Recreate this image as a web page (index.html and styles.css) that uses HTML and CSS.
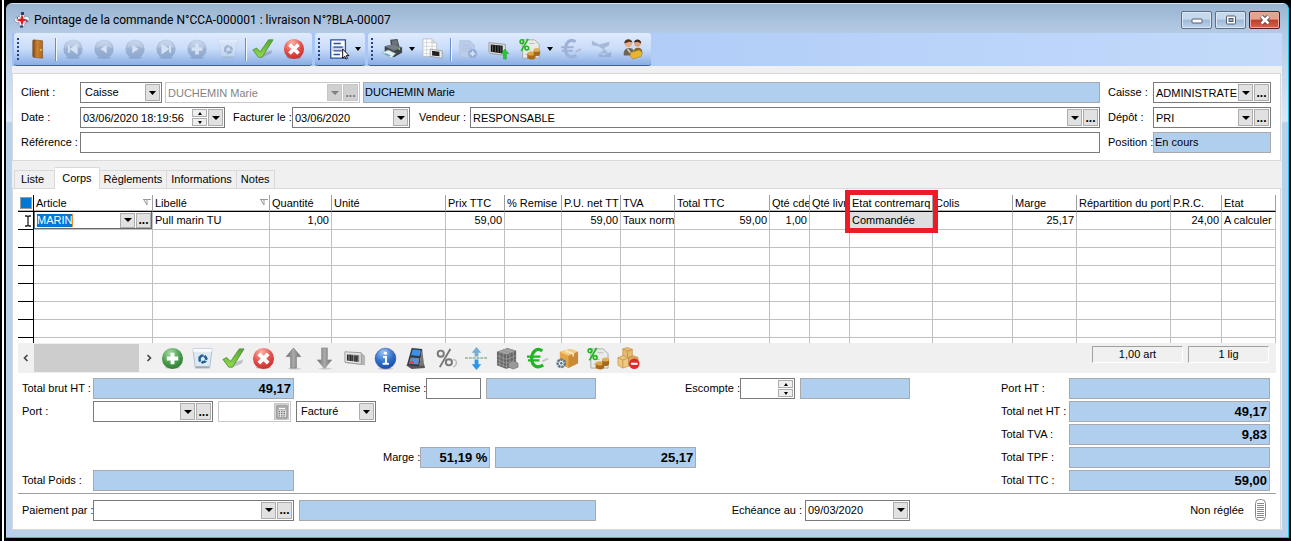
FILE: index.html
```html
<!DOCTYPE html>
<html lang="fr">
<head>
<meta charset="utf-8">
<title>Pointage de la commande</title>
<link rel="stylesheet" href="styles.css">
</head>
<body>
<svg class="defs" aria-hidden="true">
  <defs>
    <radialGradient id="g-green" cx=".4" cy=".25" r=".8"><stop offset="0" stop-color="#a9dba6"/><stop offset=".6" stop-color="#479a4a"/><stop offset="1" stop-color="#2c7a35"/></radialGradient>
    <radialGradient id="g-red" cx=".4" cy=".2" r=".8"><stop offset="0" stop-color="#ffb3aa"/><stop offset=".6" stop-color="#e2504a"/><stop offset="1" stop-color="#c83030"/></radialGradient>
    <radialGradient id="g-blue" cx=".4" cy=".2" r=".8"><stop offset="0" stop-color="#9cc4f5"/><stop offset=".6" stop-color="#2f6fcd"/><stop offset="1" stop-color="#1b4fa6"/></radialGradient>
    <linearGradient id="g-ball" x1="0" y1="0" x2="0" y2="1"><stop offset="0" stop-color="#c2d2ea"/><stop offset=".5" stop-color="#9db3d3"/><stop offset="1" stop-color="#8ba6cf"/></linearGradient>
    <linearGradient id="g-check" x1="0" y1="0" x2="0" y2="1"><stop offset="0" stop-color="#5aa636"/><stop offset="1" stop-color="#8fdc4c"/></linearGradient>
    <linearGradient id="g-gray" x1="0" y1="0" x2="1" y2="0"><stop offset="0" stop-color="#6e6e6e"/><stop offset=".5" stop-color="#aaa"/><stop offset="1" stop-color="#6e6e6e"/></linearGradient>
    <linearGradient id="g-door" x1="0" y1="0" x2="1" y2="0"><stop offset="0" stop-color="#8a4b12"/><stop offset=".4" stop-color="#cf8a35"/><stop offset="1" stop-color="#a9651f"/></linearGradient>
  </defs>
  <symbol id="door" viewBox="0 0 24 24"><path d="M7 2l10 1v19l-10-1z" fill="url(#g-door)" stroke="#7a4312" stroke-width=".6"/><path d="M9 5l2 .4v6L9 11zm3.500.700l2 .4v6l-2-.5zM9 13l2 .4v6L9 19zm3.500.700l2 .4v6l-2-.5z" fill="#b97428"/><path d="M7 2l-1 1v17l1 1z" fill="#6b3a0d"/><circle cx="15.300" cy="13" r=".9" fill="#ffe28a"/></symbol>
  <symbol id="ball" viewBox="0 0 24 24"><ellipse cx="12" cy="21.500" rx="8" ry="1.500" fill="#7c98c6" opacity=".5"/><circle cx="12" cy="12" r="10.500" fill="url(#g-ball)"/><path d="M3 11a9 8 0 0118 0c-5-2-13-2-18 0z" fill="#fff" opacity=".2"/></symbol>
  <symbol id="first" viewBox="0 0 24 24"><use href="#ball"/><path d="M7.500 8v8M16 8l-6 4 6 4z" fill="#d5e2f6" stroke="#d5e2f6" stroke-width="2"/></symbol>
  <symbol id="prev" viewBox="0 0 24 24"><use href="#ball"/><path d="M15 7.500L8 12l7 4.500z" fill="#d5e2f6"/></symbol>
  <symbol id="next" viewBox="0 0 24 24"><use href="#ball"/><path d="M9 7.500l7 4.500-7 4.500z" fill="#d5e2f6"/></symbol>
  <symbol id="last" viewBox="0 0 24 24"><use href="#ball"/><path d="M16.500 8v8M8 8l6 4-6 4z" fill="#d5e2f6" stroke="#d5e2f6" stroke-width="2"/></symbol>
  <symbol id="plus-off" viewBox="0 0 24 24"><use href="#ball"/><path d="M12 6v12M6 12h12" stroke="#d5e2f6" stroke-width="4"/></symbol>
  <symbol id="plus" viewBox="0 0 24 24"><ellipse cx="12" cy="21.500" rx="8" ry="1.500" fill="#aaa" opacity=".5"/><circle cx="12" cy="12" r="11" fill="url(#g-green)"/><path d="M12 6v12M6 12h12" stroke="#fff" stroke-width="4"/></symbol>
  <symbol id="bin" viewBox="0 0 24 24"><path d="M2 2h20l-2.500 20h-15z" fill="#dfe9f2" stroke="#9fb2c4" stroke-width=".8"/><path d="M2 2h20l-.4 3H2.400z" fill="#f7fbff"/><path d="M5 20h14l-.3 2H5.200z" fill="#9aa9b8"/><path d="M9 11l2-2h3l2 3-1 3-3 1-3-2z" fill="none" stroke="#1f5f98" stroke-width="2.600" stroke-dasharray="5 1"/></symbol>
  <symbol id="check" viewBox="0 0 24 24"><path d="M9 22l12-5 1-4-8 3z" fill="#667" opacity=".35"/><path d="M1 13l4-2 4 4 9-13 5 0L11 21H7z" fill="url(#g-check)" stroke="#4b8f2c" stroke-width=".9"/></symbol>
  <symbol id="cross" viewBox="0 0 24 24"><ellipse cx="12" cy="21.500" rx="8" ry="1.500" fill="#855" opacity=".4"/><circle cx="12" cy="12" r="11" fill="url(#g-red)"/><path d="M8.500 8.500l7 7m0-7l-7 7" stroke="#fff" stroke-width="4" stroke-linecap="square"/></symbol>
  <symbol id="list" viewBox="0 0 24 24"><path d="M3 2h16v20H3z" fill="#fff" stroke="#2450a0" stroke-width="1.400"/><path d="M3.600 9h15v5h-15z" fill="#cdd5e4"/><path d="M6 6h8M6 10h10M6 14h9M6 18h7" stroke="#2450a0" stroke-width="1.500"/><path d="M16 12v10l2.300-2 1.400 3 1.600-.8-1.400-3h3z" fill="#fff" stroke="#000" stroke-width="1"/></symbol>
  <symbol id="printer" viewBox="0 0 24 24"><path d="M10 2l8-1 2 8-9 1z" fill="#44494f"/><path d="M11.500 3l6-.7 1 6-6 .7z" fill="#6d747b"/><path d="M4 9l9-2 10 3v6l-9 5-10-4z" fill="#3f444a"/><path d="M4 9l9-2 10 3-9 4z" fill="#767d84"/><path d="M1 16l7-3 8 4-5 5z" fill="#e2eef5" stroke="#8aa" stroke-width=".7"/><path d="M4 17l6 2.500" stroke="#55a5c0" stroke-width="1.500"/><circle cx="20" cy="12" r="1" fill="#7fd46f"/></symbol>
  <symbol id="doc-code" viewBox="0 0 24 24"><path d="M1 1h9l6 5v14H1z" fill="#fdfdfd" stroke="#b4b4b4" stroke-width=".8"/><path d="M1 5h10M1 9h15M1 13h15M1 17h15M5 1v19M11 5v15" stroke="#cfd3d8" stroke-width=".9"/><path d="M10 1v5h6z" fill="#d2d2d2"/><path d="M9 12l13 2v8l-13-2z" fill="#eee" stroke="#888" stroke-width=".7"/><path d="M11 14l8 1v5l-8-1z" fill="#222"/></symbol>
  <symbol id="doc-plus" viewBox="0 0 24 24"><path d="M3 3h11l5 5v13H3z" fill="#bccdea" stroke="#aabddd" stroke-width=".8"/><path d="M6 8h8M6 11h10M6 14h6" stroke="#abbfdf"/><circle cx="17" cy="17" r="5" fill="#94acd3"/><path d="M17 14v6m-3-3h6" stroke="#d7e3f6" stroke-width="1.800"/></symbol>
  <symbol id="barcode" viewBox="0 0 24 24"><path d="M2 5l17 1 4 3v10l-19-2-2-2z" fill="#b5b5b5"/><path d="M2 5l17 1v12L2 16z" fill="#e6e6e6" stroke="#8c8c8c" stroke-width=".8"/><path d="M4 7.500l13 .8v7.500L4 14.200z" fill="#888"/><path d="M5 8v6m2.500-6v6.500M9.500 8.500v6m3-5.500v6m2-6v6" stroke="#111" stroke-width="1.200"/></symbol>
  <symbol id="barcode-up" viewBox="0 0 24 24"><path d="M1 5l18 2v12L3 17l-2-2z" fill="#ddd" stroke="#888" stroke-width=".8"/><path d="M3 7l13 1.500V17L3 15z" fill="#111"/><path d="M5 7.500v7.500m3-7v7.500m3-7v7.500m3-7v7.500" stroke="#999" stroke-width=".6"/><path d="M18.500 12l4 5h-2.500v6h-3v-6h-2.500z" fill="#27c931" stroke="#0d9418" stroke-width=".5"/></symbol>
  <symbol id="doc-pct" viewBox="0 0 24 24"><path d="M4 2h13l5 5v15H4z" fill="#e9ebe9" stroke="#969a96" stroke-width=".8"/><path d="M11 6h6M8 13h5M7 18h3" stroke="#b5bbb5"/><circle cx="3.200" cy="4" r="2" fill="none" stroke="#1eb81e" stroke-width="1.700"/><circle cx="8.500" cy="11" r="2" fill="none" stroke="#1eb81e" stroke-width="1.700"/><path d="M10 1L2.500 14" stroke="#1eb81e" stroke-width="1.800"/><path d="M9 17v5c3 2 8 2 9-.5v-5z" fill="#a96a18"/><ellipse cx="13.500" cy="17" rx="4.500" ry="2.200" fill="#dba84c"/><path d="M16 13v6c3 1.500 6 1 7-1v-5z" fill="#a56a1e"/><ellipse cx="19.500" cy="13" rx="3.700" ry="2" fill="#deb05d"/></symbol>
  <symbol id="euro" viewBox="0 0 24 24"><path d="M17 15l6-3" stroke="#999" opacity=".5" stroke-width="2"/><path d="M17 4c-6-4-11 1-11 8s5 11 12 7" fill="none" stroke="currentColor" stroke-width="3.400"/><path d="M1 10h14M2 14h12" stroke="currentColor" stroke-width="2.200"/></symbol>
  <symbol id="handshake" viewBox="0 0 24 24"><path d="M1 3l8 4 11-3v4l-6 3 5 6H9l5-4-6-4-7-1z" fill="#a6b9d9"/><path d="M8 17l6 2 8-4v6H9z" fill="#9ab0d4"/></symbol>
  <symbol id="people" viewBox="0 0 24 24"><path d="M2 19c-1-5 2-8 6-8s6 3 5 8z" fill="#6d6550"/><path d="M13 14c0-4 8-5 9 0v3h-9z" fill="#7c6434"/><circle cx="7" cy="6" r="4" fill="#e7ad87"/><path d="M2.500 6c0-6 8-6 9-1L8 4z" fill="#57321c"/><circle cx="17" cy="6" r="3.500" fill="#dfa079"/><path d="M13 5c1-5 8-4 8 1l-4-2z" fill="#3c2416"/><path d="M9 16l10-3 3 3-1 4-9 3-3-3z" fill="#e8b52f" stroke="#b5821a" stroke-width=".7"/><path d="M6 12l3 4" stroke="#ddd" stroke-width="1.500"/></symbol>
  <symbol id="up" viewBox="0 0 24 24"><ellipse cx="13" cy="22.500" rx="7" ry="1" fill="#999" opacity=".4"/><path d="M12 1l7.500 9H15v12H9V10H4.500z" fill="url(#g-gray)" stroke="#777" stroke-width=".7"/></symbol>
  <symbol id="down" viewBox="0 0 24 24"><ellipse cx="13" cy="22.500" rx="7" ry="1" fill="#999" opacity=".4"/><path d="M12 22.500l7.500-9H15V1H9v12.500H4.500z" fill="url(#g-gray)" stroke="#888" stroke-width=".7"/></symbol>
  <symbol id="info" viewBox="0 0 24 24"><ellipse cx="12" cy="22.500" rx="8" ry="1.200" fill="#999" opacity=".4"/><circle cx="12" cy="12" r="10.800" fill="url(#g-blue)" stroke="#1a4a9c" stroke-width=".6"/><circle cx="12" cy="6.500" r="1.700" fill="#fff"/><path d="M9.500 10.500h3v6.500M9 17.500h6.500" fill="none" stroke="#fff" stroke-width="2"/></symbol>
  <symbol id="terminal" viewBox="0 0 24 24"><path d="M2 19l6 4 14-1-1-4z" fill="#555"/><path d="M8 1l11 1-3 18-13-1z" fill="#333a44"/><path d="M9 2.500l8.500.800-1 6-9-.8z" fill="#3c92e8"/><path d="M7 11l9 .8-1 6.500-10-.8z" fill="#7b8fa8"/><path d="M8.500 12l-1 5m4-5l-1 5m4-4.500l-1 5" stroke="#3f93f5" stroke-width="1.500"/><path d="M6 16h4" stroke="#e33" stroke-width="2"/><path d="M19 2l2 17-5 1z" fill="#777"/></symbol>
  <symbol id="percent" viewBox="0 0 24 24"><path d="M19 13c5 1 4 6 0 8" fill="none" stroke="#bbb" stroke-width="1.400"/><circle cx="6" cy="7" r="3.200" fill="none" stroke="#777" stroke-width="2"/><circle cx="14.500" cy="16" r="3.200" fill="none" stroke="#777" stroke-width="2"/><path d="M16 2L5 21" stroke="#777" stroke-width="2"/></symbol>
  <symbol id="split" viewBox="0 0 24 24"><path d="M12 0l5 6h-3v4h-4V6H7z" fill="#75aed4"/><path d="M12 24l5-6h-3v-5h-4v5H7z" fill="#2d97ea"/><path d="M0 11.500h24" stroke="#58966c" stroke-width="1.200" stroke-dasharray="3 1"/></symbol>
  <symbol id="cube" viewBox="0 0 24 24"><path d="M1 5l11-4 9 3v14l-10 5-10-4z" fill="#666"/><path d="M1 5l11-4 9 3-10 4z" fill="#999"/><path d="M1 9l10 4 10-4M1 13l10 4 10-4M1 16.500l10 4 10-4M4 6v14m3.500-13v14M11 8v15m3.500-16v14M18 5v14M4 4l10 3.500M8 2.500l10 3" fill="none" stroke="#b2b2b2" stroke-width=".6"/><path d="M13 17l5-3 5 3v4l-5 2-5-2z" fill="#999" stroke="#666" stroke-width=".6"/></symbol>
  <symbol id="box-gear" viewBox="0 0 24 24"><path d="M4 5l11-3 8 3v12l-10 5-9-4z" fill="#e4a548"/><path d="M4 5l11-3 8 3-10 4z" fill="#f6cd84"/><path d="M13 9l10-4v12l-10 5z" fill="#c98a35"/><path d="M10 4l8 3v3" stroke="#fff0c8" stroke-width="1.500" fill="none"/><circle cx="5.500" cy="17" r="3.800" fill="#e7edf2" stroke="#5d7488" stroke-width="2.600" stroke-dasharray="2.600 .7"/><circle cx="5.500" cy="17" r="1.300" fill="#5d7488"/></symbol>
  <symbol id="boxes-minus" viewBox="0 0 24 24"><path d="M6 2l5-1.500 5 2v7l-5 2-5-2z" fill="#e6ba72" stroke="#b98537" stroke-width=".6"/><path d="M1 11l6-2 5 2.500V20l-6 2-5-3z" fill="#edc882" stroke="#b98537" stroke-width=".6"/><path d="M12 11l5-2 5 2v8l-5 2-5-2z" fill="#d9a75a" stroke="#b98537" stroke-width=".6"/><path d="M1 11l5 2.500 6-2M6 13.500V22M6 2l5 2.500 5-2M11 4.500v6" fill="none" stroke="#b98537" stroke-width=".7"/><circle cx="18" cy="17.500" r="5.500" fill="#df2a2a"/><path d="M14.500 17.500h7" stroke="#fff" stroke-width="2.200"/></symbol>
  <symbol id="logo" viewBox="0 0 16 16"><path d="M8 0l3 4-1 1 4-1 2 4-4 3-1-1 0 3-3 3-3-3 0-3-2 1-3-3 3-4 3 1-1-1z" fill="#eef3f8" stroke="#7a93b0" stroke-width=".7"/><path d="M8 4l1 3 3 1-3 1-1 3-1-3-3-1 3-1z" fill="#e0191c" stroke="#e0191c" stroke-width="1.200"/><path d="M7 0h3v3H7zM2 6l2-1v2zM12 8l3 1-3 1zM6 13.500h3v2H6z" fill="#24416e"/></symbol>
  <symbol id="calc" viewBox="0 0 12 14"><path d="M1 1h10v12H1z" fill="#e4e4e4" stroke="#777"/><path d="M2.500 2.500h7v2h-7z" fill="#fff" stroke="#888" stroke-width=".6"/><path d="M2.500 6.500h7m-7 2.200h7m-7 2.200h7" stroke="#777" stroke-width="1.300" stroke-dasharray="1.500 1"/></symbol>
</svg>

<div class="window">
  <header class="titlebar">
    <svg class="logo"><use href="#logo"/></svg>
    <h1>Pointage de la commande N°CCA-000001 : livraison N°?BLA-00007</h1>
    <button class="win-btn" aria-label="Réduire"><svg viewBox="0 0 12 10"><rect x="1" y="4" width="10" height="4" rx="1" fill="#fff" stroke="#555b6b"/></svg></button>
    <button class="win-btn" aria-label="Agrandir"><svg viewBox="0 0 12 10"><rect x="1.500" y="1" width="9" height="8" rx="1" fill="#fff" stroke="#555b6b"/><rect x="4" y="3.500" width="4" height="3" fill="#8fb0d0" stroke="#555b6b"/></svg></button>
    <button class="win-btn close" aria-label="Fermer"><svg viewBox="0 0 12 10"><path d="M2.500 1.500l7 7m0-7l-7 7" stroke="#4d4450" stroke-width="4.400"/><path d="M2.500 1.500l7 7m0-7l-7 7" stroke="#fff" stroke-width="2.600"/></svg></button>
  </header>

  <div class="content">
    <nav class="toolbar">
      <div class="group">
        <span class="grip"></span>
        <button class="tool" aria-label="Quitter"><svg><use href="#door"/></svg></button>
        <span class="sep"></span>
        <button class="tool" aria-label="Premier"><svg><use href="#first"/></svg></button>
        <button class="tool" aria-label="Précédent"><svg><use href="#prev"/></svg></button>
        <button class="tool" aria-label="Suivant"><svg><use href="#next"/></svg></button>
        <button class="tool" aria-label="Dernier"><svg><use href="#last"/></svg></button>
        <button class="tool" aria-label="Ajouter"><svg><use href="#plus-off"/></svg></button>
        <button class="tool faded" aria-label="Supprimer"><svg><use href="#bin"/></svg></button>
        <span class="sep"></span>
        <button class="tool" aria-label="Valider"><svg><use href="#check"/></svg></button>
        <button class="tool" aria-label="Annuler"><svg><use href="#cross"/></svg></button>
      </div>
      <div class="group">
        <span class="grip"></span>
        <button class="tool" aria-label="Liste"><svg><use href="#list"/></svg></button>
        <button class="drop" aria-label="Options de liste"></button>
      </div>
      <div class="group">
        <span class="grip"></span>
        <button class="tool" aria-label="Imprimer"><svg><use href="#printer"/></svg></button>
        <button class="drop" aria-label="Options d'impression"></button>
        <button class="tool" aria-label="Étiquettes"><svg><use href="#doc-code"/></svg></button>
        <span class="sep"></span>
        <button class="tool" aria-label="Nouveau document"><svg><use href="#doc-plus"/></svg></button>
        <button class="tool" aria-label="Code barre"><svg><use href="#barcode-up"/></svg></button>
        <button class="tool" aria-label="Tarifs"><svg><use href="#doc-pct"/></svg></button>
        <button class="drop" aria-label="Options de tarifs"></button>
        <button class="tool euro-off" aria-label="Règlement"><svg><use href="#euro"/></svg></button>
        <button class="tool" aria-label="Accord"><svg><use href="#handshake"/></svg></button>
        <button class="tool" aria-label="Clients"><svg><use href="#people"/></svg></button>
      </div>
    </nav>

    <form class="panel head-form">
      <div class="head-left">
        <div class="row">
          <label class="lbl" for="client">Client :</label>
          <div class="pair">
            <select id="client" class="box select w-client"><option>Caisse</option></select>
            <div class="box combo off w-name"><input aria-label="Nom du client" value="DUCHEMIN Marie" disabled><button type="button" class="mini arrow" aria-label="Dérouler" disabled></button><button type="button" class="mini dots" disabled>...</button></div>
            <output class="box ro grow">DUCHEMIN Marie</output>
          </div>
        </div>
        <div class="row">
          <label class="lbl" for="date">Date :</label>
          <div class="box combo w-date"><input id="date" value="03/06/2020 18:19:56"><span class="spin"><button type="button" class="spin-up" aria-label="Plus"></button><button type="button" class="spin-down" aria-label="Moins"></button></span><button type="button" class="mini arrow" aria-label="Calendrier"></button></div>
          <label class="lbl-mid" for="fact">Facturer le :</label>
          <div class="box combo w-fact"><input id="fact" value="03/06/2020"><button type="button" class="mini arrow" aria-label="Calendrier"></button></div>
          <label class="lbl-seller" for="vendeur">Vendeur :</label>
          <div class="box combo grow"><input id="vendeur" value="RESPONSABLE"><button type="button" class="mini arrow" aria-label="Dérouler"></button><button type="button" class="mini dots">...</button></div>
        </div>
        <div class="row">
          <label class="lbl" for="ref">Référence :</label>
          <input id="ref" class="box grow">
        </div>
      </div>
      <div class="head-right">
        <div class="row"><label class="lbl-right" for="caisse">Caisse :</label><div class="box combo grow"><input id="caisse" value="ADMINISTRATE"><button type="button" class="mini arrow" aria-label="Dérouler"></button><button type="button" class="mini dots">...</button></div></div>
        <div class="row"><label class="lbl-right" for="depot">Dépôt :</label><div class="box combo grow"><input id="depot" value="PRI"><button type="button" class="mini arrow" aria-label="Dérouler"></button><button type="button" class="mini dots">...</button></div></div>
        <div class="row"><span class="lbl-right">Position :</span><output class="box ro grow">En cours</output></div>
      </div>
    </form>

    <div class="tabs" role="tablist">
      <button role="tab" class="tab tab-list">Liste</button>
      <button role="tab" class="tab active" aria-selected="true">Corps</button>
      <button role="tab" class="tab">Règlements</button>
      <button role="tab" class="tab">Informations</button>
      <button role="tab" class="tab">Notes</button>
    </div>

    <main class="panel page">
      <table class="grid">
        <colgroup><col class="c16"><col class="c119"><col class="c117"><col class="c62"><col><col class="c59"><col class="c57"><col class="c59"><col class="c54"><col class="c95"><col class="c40"><col class="c40"><col class="c83"><col class="c80"><col class="c64"><col class="c94"><col class="c51"><col class="c54"></colgroup>
        <thead>
          <tr>
            <th class="mark"><span class="square"></span></th>
            <th class="filter">Article<svg viewBox="0 0 8 7"><path d="M0 .5h8M1 1l3 5V1" fill="none" stroke="#999"/></svg></th>
            <th class="filter">Libellé<svg viewBox="0 0 8 7"><path d="M0 .5h8M1 1l3 5V1" fill="none" stroke="#999"/></svg></th>
            <th>Quantité</th><th>Unité</th><th>Prix TTC</th><th>% Remise</th><th>P.U. net TT</th><th>TVA</th><th>Total TTC</th><th>Qté cde</th><th>Qté livr</th>
            <th class="marked">Etat contremarq<span class="highlight"></span></th>
            <th>Colis</th><th>Marge</th><th>Répartition du port</th><th>P.R.C.</th><th>Etat</th>
          </tr>
        </thead>
        <tbody>
          <tr>
            <td><svg class="caret" viewBox="0 0 8 12"><path d="M1 1h2l1 1 1-1h2M4 2v8M1 11h2l1-1 1 1h2" fill="none" stroke="#222" stroke-width="1.300"/></svg></td>
            <td class="edit"><div class="cell-combo"><span class="sel">MARIN</span><button class="mini arrow" aria-label="Dérouler"></button><button class="mini dots">...</button></div></td>
            <td>Pull marin TU</td><td class="num">1,00</td><td></td><td class="num">59,00</td><td></td><td class="num">59,00</td><td>Taux norm</td><td class="num">59,00</td><td class="num">1,00</td><td></td><td class="gray">Commandée</td><td></td><td class="num">25,17</td><td></td><td class="num">24,00</td><td>A calculer</td>
          </tr>
          <tr><td><td><td><td><td><td><td><td><td><td><td><td><td><td><td><td><td><td></tr>
          <tr><td><td><td><td><td><td><td><td><td><td><td><td><td><td><td><td><td><td></tr>
          <tr><td><td><td><td><td><td><td><td><td><td><td><td><td><td><td><td><td><td></tr>
          <tr><td><td><td><td><td><td><td><td><td><td><td><td><td><td><td><td><td><td></tr>
          <tr><td><td><td><td><td><td><td><td><td><td><td><td><td><td><td><td><td><td></tr>
          <tr><td><td><td><td><td><td><td><td><td><td><td><td><td><td><td><td><td><td></tr>
          <tr class="partial"><td><td><td><td><td><td><td><td><td><td><td><td><td><td><td><td><td><td></tr>
        </tbody>
      </table>

      <div class="actions">
        <div class="scroller">
          <button aria-label="Défiler à gauche"><svg viewBox="0 0 6 8"><path d="M4.500 1l-3 3 3 3" fill="none" stroke="#444" stroke-width="1.600"/></svg></button>
          <span class="thumb"></span>
          <button aria-label="Défiler à droite"><svg viewBox="0 0 6 8"><path d="M1.500 1l3 3-3 3" fill="none" stroke="#444" stroke-width="1.600"/></svg></button>
        </div>
        <div class="tools">
          <button aria-label="Ajouter"><svg><use href="#plus"/></svg></button>
          <button aria-label="Supprimer"><svg><use href="#bin"/></svg></button>
          <button aria-label="Valider"><svg><use href="#check"/></svg></button>
          <button aria-label="Annuler"><svg><use href="#cross"/></svg></button>
          <button aria-label="Monter"><svg><use href="#up"/></svg></button>
          <button aria-label="Descendre"><svg><use href="#down"/></svg></button>
          <button aria-label="Code barre"><svg><use href="#barcode"/></svg></button>
          <button aria-label="Informations"><svg><use href="#info"/></svg></button>
          <button aria-label="Terminal"><svg><use href="#terminal"/></svg></button>
          <button aria-label="Remise"><svg><use href="#percent"/></svg></button>
          <button aria-label="Insérer"><svg><use href="#split"/></svg></button>
          <button aria-label="Stock"><svg><use href="#cube"/></svg></button>
          <button class="euro" aria-label="Prix"><svg><use href="#euro"/></svg></button>
          <button aria-label="Colisage"><svg><use href="#box-gear"/></svg></button>
          <button aria-label="Tarifs"><svg><use href="#doc-pct"/></svg></button>
          <button aria-label="Retirer"><svg><use href="#boxes-minus"/></svg></button>
        </div>
        <output class="status w-art">1,00 art</output>
        <output class="status w-lig">1 lig</output>
      </div>

      <form class="totals">
        <div class="sums">
          <span>Total brut HT :</span><output class="box ro bold w-201">49,17</output>
          <div class="pair near"><label for="remise">Remise :</label><input id="remise" class="box w-55"><output class="box ro w-110"></output></div>
          <div class="pair near"><label for="esc">Escompte :</label><div class="box combo w-55"><input id="esc"><span class="spin"><button type="button" class="spin-up" aria-label="Plus"></button><button type="button" class="spin-down" aria-label="Moins"></button></span></div><output class="box ro w-110"></output></div>

          <label for="port">Port :</label>
          <div class="pair port"><div class="box combo w-120"><input id="port"><button type="button" class="mini arrow" aria-label="Dérouler"></button><button type="button" class="mini dots">...</button></div><div class="box combo off w-73"><input aria-label="Montant du port" disabled><button type="button" class="mini calc" aria-label="Calculatrice" disabled><svg><use href="#calc"/></svg></button></div><select class="box select w-80" aria-label="Facturation du port"><option>Facturé</option></select></div>

          <div class="pair near margin"><span>Marge :</span><output class="box ro bold w-70">51,19 %</output><output class="box ro bold w-201">25,17</output></div>

          <span class="last">Total Poids :</span><output class="box ro w-201 last"></output>
        </div>
        <div class="side">
          <span>Port HT :</span><output class="box ro bold"></output>
          <span>Total net HT :</span><output class="box ro bold">49,17</output>
          <span>Total TVA :</span><output class="box ro bold">9,83</output>
          <span>Total TPF :</span><output class="box ro bold"></output>
          <span>Total TTC :</span><output class="box ro bold">59,00</output>
        </div>
      </form>

      <footer class="pay">
        <label class="pay-lbl" for="pay">Paiement par :</label>
        <div class="box combo w-201"><input id="pay"><button type="button" class="mini arrow" aria-label="Dérouler"></button><button type="button" class="mini dots">...</button></div>
        <output class="box ro pay-ro"></output>
        <label class="due" for="ech">Echéance au :</label>
        <div class="box combo w-105"><input id="ech" value="09/03/2020"><button type="button" class="mini arrow" aria-label="Calendrier"></button></div>
        <span class="unpaid">Non réglée</span>
        <svg class="coins" viewBox="0 0 11 22"><rect x=".5" y=".5" width="10" height="21" rx="4" fill="#fff" stroke="#888"/><path d="M2 4.500h7M2 6.500h7M2 8.500h7M2 10.500h7M2 12.500h7M2 14.500h7M2 16.500h7M2 18.500h7" stroke="#888"/></svg>
      </footer>
    </main>
  </div>
</div>
</body>
</html>
```
FILE: styles.css
```css
* { box-sizing: border-box; }
body {
  margin: 0;
  min-height: 100vh;
  padding: 3px 2px 3px 6px;
  display: flex;
  background: linear-gradient(to right, #000 2px, #fff 2px 4px, #000 4px);
  font: 11px/13px "Liberation Sans", Arial, sans-serif;
  color: #000;
}
button, input, select { font: inherit; color: inherit; padding: 0; margin: 0; border: 0; background: none; min-width: 0; border-radius: 0; }
.defs { position: absolute; width: 0; height: 0; }

.window {
  flex: 1;
  min-width: 0;
  display: flex;
  flex-direction: column;
  padding: 0 6px 7px;
  border-right: 1px solid #19c8e8;
  border-bottom: 1px solid #19c8e8;
  border-radius: 6px 6px 0 0;
  background: linear-gradient(#d4e2f0 0 1px, #99b4d1 1px, #b4cbe5 30px, #dbe8f8 118px, #b9d1ea 120px);
}
.titlebar { height: 30px; display: flex; align-items: center; gap: 3px; padding: 4px 2px 0; }
.titlebar h1 { flex: 1; margin: 0 0 0 1px; font: 12px/16px Roboto, sans-serif; }
.logo { width: 16px; height: 16px; }
.win-btn {
  width: 31px; height: 18px;
  display: grid; place-items: center;
  border: 1px solid #5d7186; border-radius: 2px;
  background: linear-gradient(#c5d8ec 45%, #9db9d6 50%, #bdd3ea);
  box-shadow: inset 0 0 0 1px #dbe7f4;
}
.win-btn svg { width: 12px; height: 10px; }
.win-btn.close { border-color: #5a1f1c; background: linear-gradient(#e4a291 45%, #bf3d24 50%, #d0684c); box-shadow: inset 0 0 0 1px #e8ab9d; }

.content { flex: 1; display: flex; flex-direction: column; background: #f0f0f0; }
.toolbar { height: 33px; display: flex; gap: 3px; padding-left: 2px; margin-bottom: 7px; background: linear-gradient(to right, #9fbff5, #c3dafa); }
.group {
  display: flex; align-items: center; padding: 0 3px;
  border-bottom: 1px solid #3b619c; border-radius: 3px;
  background: linear-gradient(#dfebfd, #c9dcf9 50%, #8aade4);
}
.grip { width: 2px; height: 23px; margin-right: 3px; background: repeating-linear-gradient(#27418a 0 2px, transparent 2px 4px); }
.sep { width: 4px; height: 23px; background: linear-gradient(to right, transparent 2px, #6a8ccb 2px 3px, #f4f8ff 3px); }
.tool { width: 31px; height: 28px; display: grid; place-items: center; }
.tool svg { width: 22px; height: 22px; }
.faded { opacity: .3; filter: grayscale(.6); }
.euro-off { color: #9db2d6; }
.drop { width: 10px; height: 28px; display: grid; place-items: center; }
.group:nth-child(2) .drop { width: 8px; }
.drop::before, .arrow::before { content: ""; border: 3px solid transparent; border-top: 4px solid #000; border-bottom: 0; }

.panel { background: #fff; border: 1px solid #d9d9d9; margin-right: 1px; }
.head-form { display: flex; gap: 8px; padding: 8px 9px 7px 8px; }
.head-left { flex: 1; display: grid; gap: 4px; min-width: 0; }
.head-right { width: 163px; display: grid; gap: 4px; }
.row { display: flex; align-items: center; min-width: 0; white-space: nowrap; }
.pair { flex: 1; display: flex; align-items: center; gap: 3px; }
.near { gap: 5px; }
.near > :first-child { margin-right: -5px; }
.lbl { width: 59px; }
.lbl-mid { width: 67px; padding-left: 8px; }
.lbl-seller { width: 60px; padding-left: 9px; }
.lbl-right { width: 45px; }
.grow { flex: 1; }

.box { height: 21px; border: 1px solid #7a7a7a; background: #fff; padding: 0 2px; display: block; min-width: 0; }
.ro { background: #b0ceed; border-color: #a9a9ad; line-height: 19px; padding: 0 1px; }
.bold { font-weight: bold; font-size: 13px; text-align: right; padding-right: 2px; }
.combo { display: flex; align-items: center; gap: 1px; padding: 0 1px 0 2px; }
.combo input { flex: 1; width: 0; height: 17px; }
.off { border-color: #c8c8c8; color: #838383; }
.mini { width: 15px; height: 17px; flex: none; display: grid; place-items: center; border: 1px solid #adadad; background: #e1e1e1; line-height: 10px; font-weight: bold; font-size: 12px; }
.off .mini { background: #d0d0d0; border-color: #c6c6c6; color: #777; }
.off .arrow::before { border-top-color: #808080; }
.off .calc svg { width: 12px; height: 14px; }
.arrow::before { border-width: 4px 4px 0; }
.spin { display: grid; gap: 1px; width: 15px; }
.spin button { height: 8px; display: grid; place-items: center; border: 1px solid #adadad; background: #eee; }
.spin button::before { content: ""; border: 2px solid transparent; }
.spin .spin-up::before { border-top: 0; border-bottom: 3px solid #000; }
.spin .spin-down::before { border-bottom: 0; border-top: 3px solid #000; }
.select {
  appearance: none; padding: 0 18px 0 4px;
  background: #fff url("data:image/svg+xml,%3Csvg xmlns='http://www.w3.org/2000/svg' width='15' height='17'%3E%3Cpath d='M.5.5h14v16H.5z' fill='%23e1e1e1' stroke='%23adadad'/%3E%3Cpath d='M4 7h7l-3.500 4z'/%3E%3C/svg%3E") no-repeat right 1px center;
}
.w-client { width: 82px; }
.w-name { width: 195px; }
.w-date { width: 145px; }
.w-fact { width: 118px; }
.w-201 { width: 201px; }
.w-120 { width: 120px; }
.w-110 { width: 110px; }
.w-105 { width: 105px; }
.w-80 { width: 80px; }
.w-73 { width: 73px; }
.w-70 { width: 70px; }
.w-55 { width: 55px; }

.tabs { display: flex; align-items: flex-end; margin-top: 6px; padding-left: 2px; height: 21px; }
.tab { height: 18px; padding: 0 4px; border: 1px solid #d9d9d9; border-width: 1px 1px 0 0; }
.tab-list { padding: 0 10px 0 6px; border-left-width: 1px; }
.tab.active { height: 22px; margin-bottom: -1px; padding: 0 7px; background: #fff; position: relative; }

.page { flex: 1; display: flex; flex-direction: column; padding: 6px 4px 0 5px; }
.grid { width: 100%; table-layout: fixed; border-spacing: 0; }
.grid th, .grid td { padding: 0 1px 0 2px; overflow: hidden; white-space: nowrap; text-align: left; font-weight: normal; }
.grid th { height: 17px; border-bottom: 1px solid #000; border-right: 1px solid #a0a0a0; box-shadow: inset 0 -1px #b8b8b8; }
.grid td { height: 18px; border: 1px solid #c0c0c0; border-width: 0 1px 1px 0; }
.grid tr > :first-child { border-right-color: #000; border-bottom-color: #000; padding: 0; text-align: center; }
.grid .num { text-align: right; padding-right: 2px; }
.grid .partial td { height: 5px; border-bottom: 0; }
.grid .gray { background: #dedede; }
.grid .filter svg { float: right; width: 8px; height: 7px; margin-top: 2px; }
.grid .edit { padding: 0; }
.square { display: block; width: 10px; height: 10px; margin: 0 auto; background: #0078d7; outline: 1px solid #9a9a9a; }
.caret { display: block; width: 8px; height: 12px; margin-left: 6px; }
.cell-combo { display: flex; height: 17px; align-items: center; gap: 1px; border: 1px solid #696969; border-top: 0; padding-left: 2px; }
.cell-combo .mini { height: 15px; }
.sel { background: #0078d7; color: #fff; margin-right: auto; border-right: 1px solid #f08a24; }
.grid .marked { position: relative; overflow: visible; }
.highlight { position: absolute; z-index: 1; left: -5px; top: -5px; width: 93px; height: 43px; border: 5px solid #ed1c24; pointer-events: none; }
.c16 { width: 16px; } .c119 { width: 119px; } .c117 { width: 117px; } .c62 { width: 62px; }
.c59 { width: 59px; } .c57 { width: 57px; } .c54 { width: 54px; } .c95 { width: 95px; }
.c40 { width: 40px; } .c83 { width: 83px; } .c80 { width: 80px; } .c64 { width: 64px; }
.c94 { width: 94px; } .c51 { width: 51px; }

.actions { display: flex; background: #f0f0f0; height: 30px; padding-right: 7px; }
.scroller { display: flex; width: 139px; }
.scroller button { width: 16px; display: grid; place-items: center; }
.scroller svg { width: 6px; height: 8px; }
.thumb { flex: 1; margin: 1px 2px 1px 0; background: #cdcdcd; }
.tools { display: grid; grid-template-columns: repeat(16, 1fr); width: 487px; margin-right: auto; }
.tools button { display: grid; place-items: center; }
.tools svg { width: 23px; height: 23px; }
.euro { color: #22b422; }
.status { height: 17px; margin: 3px 0 0 5px; border: 1px solid; border-color: #a0a0a0 #fff #fff #a0a0a0; text-align: center; line-height: 15px; }
.w-art { width: 91px; }
.w-lig { width: 81px; }

.totals { display: flex; padding: 5px 6px 2px 4px; border-bottom: 1px solid #a0a0a0; }
.sums { flex: 1; display: grid; grid-template-columns: 71px 290px 302px 1fr; grid-template-rows: repeat(5, 21px); row-gap: 2px; align-items: center; white-space: nowrap; }
.port { grid-column: 2 / 5; gap: 5px; }
.margin { grid-column: 3 / 5; grid-row: 4; }
.last { grid-row: 5; }
.side { width: 269px; display: grid; grid-template-columns: 68px 1fr; grid-template-rows: repeat(5, 21px); row-gap: 2px; align-items: center; white-space: nowrap; }
.pay { display: flex; align-items: center; padding: 5px 10px 6px 4px; white-space: nowrap; }
.pay-lbl { width: 71px; }
.pay-ro { width: 297px; margin-left: 5px; }
.due { width: 209px; text-align: right; padding-right: 3px; }
.unpaid { margin-left: auto; }
.coins { width: 11px; height: 22px; margin-left: 11px; }
```
